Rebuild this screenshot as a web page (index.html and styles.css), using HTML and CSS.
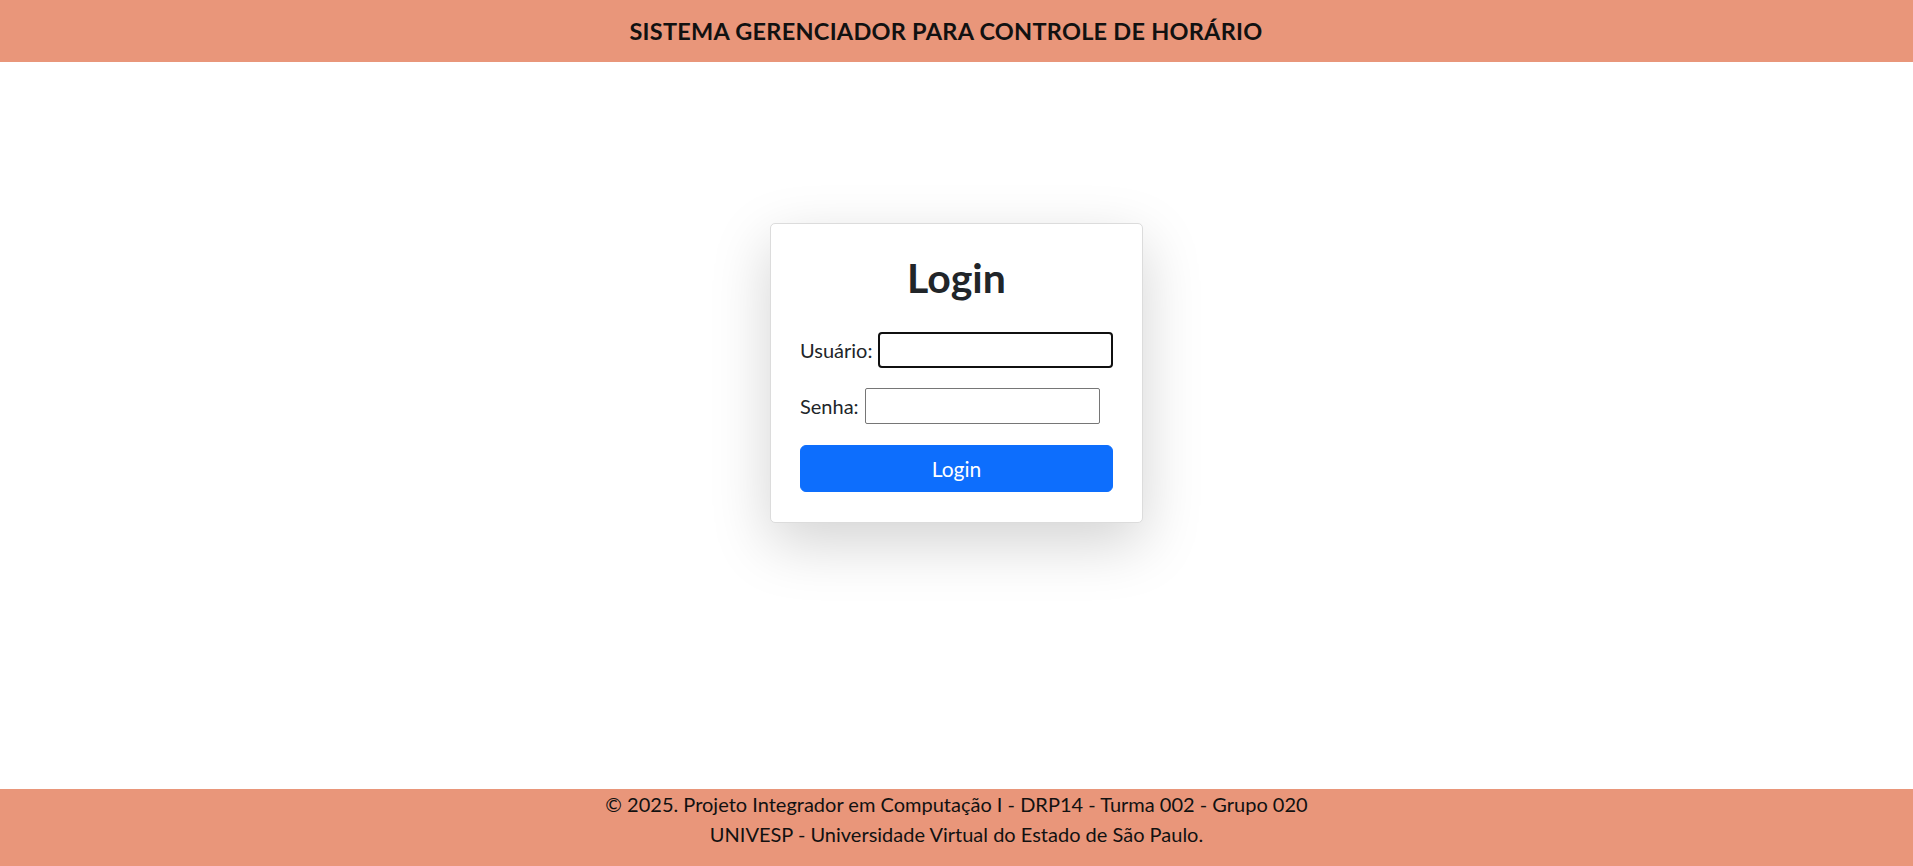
FILE: index.html
```html
<!DOCTYPE html>
<html lang="pt-BR">
<head>
<meta charset="utf-8">
<title>Login</title>
<link rel="stylesheet" href="styles.css">
</head>
<body>
<header class="topbar">
  <h1 class="topbar-title">SISTEMA GERENCIADOR PARA CONTROLE DE HORÁRIO</h1>
</header>
<main class="main">
  <div class="card">
    <h2 class="card-title">Login</h2>
    <form class="form">
      <div class="row">
        <label class="label" for="user">Usuário:</label>
        <input class="input input-focus" id="user" type="text">
      </div>
      <div class="row">
        <label class="label" for="pass">Senha:</label>
        <input class="input" id="pass" type="password">
      </div>
      <button class="btn" type="button">Login</button>
    </form>
  </div>
</main>
<footer class="footer">
  <p class="footer-line">© 2025. Projeto Integrador em Computação I - DRP14 - Turma 002 - Grupo 020</p>
  <p class="footer-line">UNIVESP - Universidade Virtual do Estado de São Paulo.</p>
</footer>
</body>
</html>
```

FILE: styles.css
```css
* { box-sizing: border-box; }

html, body { height: 100%; }

body {
  margin: 0;
  font-family: Lato, "Open Sans", sans-serif;
  font-size: 20px;
  line-height: 1.5;
  color: #212529;
  background: #ffffff;
  display: flex;
  flex-direction: column;
  min-height: 100vh;
}

.topbar {
  height: 62px;
  background: #e9967a;
  display: flex;
  align-items: center;
  justify-content: center;
  padding-right: 21px;
}

.topbar-title {
  margin: 0;
  font-size: 23.5px;
  letter-spacing: 0.25px;
  font-weight: 700;
  color: #111111;
  line-height: 1.2;
}

.main {
  flex: 1;
  display: flex;
  justify-content: center;
  align-items: flex-start;
  padding-top: 161px;
}

.card {
  width: 373px;
  background: #ffffff;
  border: 1px solid #dcdcdc;
  border-radius: 5px;
  padding: 30px 29px 30px 29px;
  box-shadow: 0 20px 60px rgba(0, 0, 0, 0.175);
}

.card-title {
  margin: 0 0 30px 0;
  text-align: center;
  font-size: 41px;
  line-height: 48px;
  font-weight: 700;
  color: #212529;
}

.form {
  display: flex;
  flex-direction: column;
  gap: 20px;
}

.row {
  display: flex;
  align-items: center;
  gap: 6px;
}

.label {
  font-size: 20px;
  line-height: 30px;
  color: #212529;
}

.input {
  width: 235px;
  height: 36px;
  border: 1px solid #767676;
  border-radius: 2px;
  padding: 1px 2px;
  font: inherit;
  background: #ffffff;
}

.input-focus {
  border: 2px solid #101010;
  border-radius: 4px;
  outline: none;
}

.btn {
  height: 47px;
  width: 100%;
  margin-top: 1px;
  border: 1px solid #0d6efd;
  border-radius: 6px;
  background: #0d6efd;
  color: #ffffff;
  font-family: inherit;
  font-size: 21px;
  line-height: 30px;
  padding: 7px 15px;
  cursor: pointer;
}

.footer {
  height: 77px;
  background: #e9967a;
  text-align: center;
  color: #111111;
}

.footer-line {
  margin: 0;
  font-size: 20px;
  line-height: 30px;
}
```
